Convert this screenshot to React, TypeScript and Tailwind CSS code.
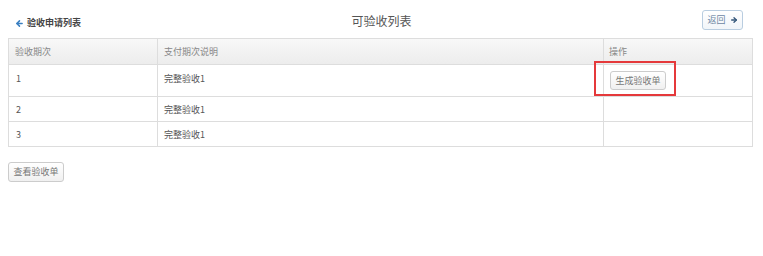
import { ArrowLeft, ArrowRight } from "lucide-react"

interface IRow {
  no: string
  desc: string
  action?: boolean
}

const rows: IRow[] = [
  { no: "1", desc: "完整验收1", action: true },
  { no: "2", desc: "完整验收1" },
  { no: "3", desc: "完整验收1" },
]

const font = { fontFamily: '"Noto Sans CJK SC", "Noto Sans", sans-serif' }

const App = () => {
  return (
    <div className="min-h-[256px] w-[763px] bg-white px-2 text-[9px] text-[#555]" style={font}>
      {/* 顶部 */}
      <div className="grid h-[38px] grid-cols-3 items-center">
        <a className="flex items-center gap-[3px] pl-[7px] pt-[8px] font-semibold text-[#444]">
          <ArrowLeft className="h-[9px] w-[9px] text-[#3a7fc1]" strokeWidth={4} />
          验收申请列表
        </a>
        <h1 className="pt-[3px] text-center text-[12px] font-normal text-[#555]">可验收列表</h1>
        <div className="flex justify-end pr-[12px] pt-[2px]">
          <button className="flex h-[20px] w-[41px] items-center justify-center gap-[4px] rounded-[3px] border border-[#b9cde0] bg-gradient-to-b from-white to-[#f1f5f9] text-[9px] text-[#6d87a3]">
            返回
            <ArrowRight className="h-[8px] w-[8px] text-[#34577a]" strokeWidth={4} />
          </button>
        </div>
      </div>

      {/* 表格 */}
      <table className="w-[744px] table-fixed border-collapse border border-[#ddd]">
        <thead>
          <tr className="h-[26px] bg-gradient-to-b from-[#f8f8f8] to-[#ececec] text-left text-[#888]">
            <th className="w-[149px] border-r border-b border-[#ddd] pl-[6px] font-normal">验收期次</th>
            <th className="w-[446px] border-r border-b border-[#ddd] pl-[6px] font-normal">支付期次说明</th>
            <th className="w-[149px] border-b border-[#ddd] pl-[5px] font-normal">操作</th>
          </tr>
        </thead>
        <tbody>
          {rows.map((row) => (
            <tr key={row.no} className={row.action ? "h-[32px]" : "h-[25px]"}>
              <td className={`border-r border-b border-[#ddd] pl-[7px] align-top ${row.action ? "pt-[7px]" : "pt-[6px]"}`}>
                {row.no}
              </td>
              <td className={`border-r border-b border-[#ddd] pl-[6px] align-top ${row.action ? "pt-[7px]" : "pt-[6px]"}`}>
                {row.desc}
              </td>
              <td className="relative border-b border-[#ddd] pl-[6px] align-top">
                {row.action && (
                  <>
                    <button className="mt-[6px] h-[19px] w-[56px] rounded-[3px] border border-[#ccc] bg-gradient-to-b from-white to-[#f0f0f0] text-[9px] text-[#777]">
                      生成验收单
                    </button>
                    <div className="absolute top-[-4px] left-[-10px] h-[35px] w-[82px] border-2 border-[#e5393b]" />
                  </>
                )}
              </td>
            </tr>
          ))}
        </tbody>
      </table>

      {/* 底部 */}
      <button className="mt-[15px] h-[20px] w-[56px] rounded-[3px] border border-[#ccc] bg-gradient-to-b from-white to-[#f0f0f0] text-[9px] text-[#777]">
        查看验收单
      </button>
    </div>
  )
}

export default App
